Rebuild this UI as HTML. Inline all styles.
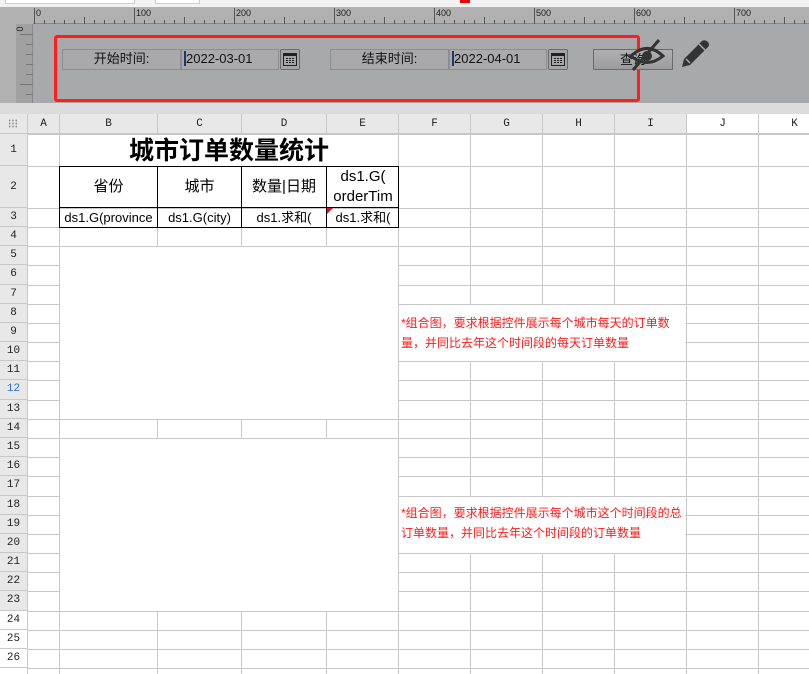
<!DOCTYPE html>
<html><head><meta charset="utf-8">
<style>
*{margin:0;padding:0;box-sizing:border-box}
body{width:809px;height:670px;overflow:hidden;background:#fff;font-family:"Liberation Sans","Noto Sans CJK SC",sans-serif;position:relative}
.a{position:absolute}
.cn{font-family:"Liberation Sans","Noto Sans CJK SC",sans-serif}
.hdr{font-family:"Liberation Mono","DejaVu Sans Mono",monospace;font-size:11px;color:#222;text-align:center}
.lbl{background:#a9a9ab;border:1px solid #8d8d8f;font-size:13px;color:#111;text-align:center;line-height:18px}
.inp{background:#aaaaac;border:1px solid #8d8d8f;font-size:13px;color:#111;line-height:18px;padding-left:2px}
.cal{border:1px solid #6a6a6a;border-radius:2px;background:#a5a5a7}
.red{color:#ff1a1a;font-size:12px;line-height:20px}
</style></head><body>
<div class="a" style="left:0;top:0;width:809px;height:7px;background:#f2f2f2"></div>
<div class="a" style="left:5px;top:0;width:130px;height:4px;background:#fff;border:1px solid #ccc;border-top:0"></div>
<div class="a" style="left:155px;top:0;width:45px;height:4px;background:#fff;border:1px solid #ccc;border-top:0"></div>
<div class="a" style="left:460px;top:0;width:10px;height:3px;background:#e00"></div>
<div class="a" style="left:0;top:7px;width:809px;height:96px;background:#a8a9ab"></div>
<div class="a" style="left:0;top:7px;width:33px;height:96px;background:#b1b1b1"></div>
<div class="a" style="left:16px;top:24px;width:17px;height:79px;background:#a1a1a1;border-right:1px solid #888"></div>
<div class="a" style="left:33px;top:7px;width:776px;height:17px;background:#b1b1b1;border-bottom:1px solid #888"></div>
<div id="ruler"></div>
<div class="a" style="left:17px;top:24px;font-size:9px;transform:rotate(90deg);color:#222">0</div>
<div class="a" style="left:54px;top:35px;width:586px;height:67px;border:3px solid #ff1e1e;border-radius:3px"></div>
<div class="a lbl" style="left:62px;top:49px;width:119px;height:21px">开始时间:</div>
<div class="a inp" style="left:181px;top:49px;width:98px;height:21px"><span style="border-left:2px solid #1a3a6a"></span>2022-03-01</div>
<div class="a cal" style="left:280px;top:49px;width:20px;height:21px"><svg width="18" height="19" viewBox="0 0 18 19"><rect x="2.5" y="3.5" width="13" height="12" fill="none" stroke="#222"/><rect x="3" y="4" width="12" height="2" fill="#222"/><g fill="#222"><rect x="5" y="8" width="2" height="1"/><rect x="8" y="8" width="2" height="1"/><rect x="11" y="8" width="2" height="1"/><rect x="5" y="10" width="2" height="1"/><rect x="8" y="10" width="2" height="1"/><rect x="11" y="10" width="2" height="1"/><rect x="5" y="12" width="2" height="1"/><rect x="8" y="12" width="2" height="1"/><rect x="11" y="12" width="2" height="1"/></g></svg></div>
<div class="a lbl" style="left:330px;top:49px;width:119px;height:21px">结束时间:</div>
<div class="a inp" style="left:449px;top:49px;width:98px;height:21px"><span style="border-left:2px solid #1a3a6a"></span>2022-04-01</div>
<div class="a cal" style="left:548px;top:49px;width:20px;height:21px"><svg width="18" height="19" viewBox="0 0 18 19"><rect x="2.5" y="3.5" width="13" height="12" fill="none" stroke="#222"/><rect x="3" y="4" width="12" height="2" fill="#222"/><g fill="#222"><rect x="5" y="8" width="2" height="1"/><rect x="8" y="8" width="2" height="1"/><rect x="11" y="8" width="2" height="1"/><rect x="5" y="10" width="2" height="1"/><rect x="8" y="10" width="2" height="1"/><rect x="11" y="10" width="2" height="1"/><rect x="5" y="12" width="2" height="1"/><rect x="8" y="12" width="2" height="1"/><rect x="11" y="12" width="2" height="1"/></g></svg></div>
<div class="a" style="left:593px;top:49px;width:80px;height:21px;border:1px solid #6a6a6a;background:linear-gradient(#b0b0b2,#9c9c9e);font-size:13px;text-align:center;line-height:19px;color:#111">查询</div>
<svg class="a" style="left:627px;top:37px" width="40" height="34" viewBox="0 0 40 34"><path d="M4 19 Q20 4 36 19 Q20 32 4 19Z" fill="none" stroke="#333" stroke-width="3"/><circle cx="20" cy="19" r="5" fill="#333"/><path d="M6 33 L32 3" stroke="#333" stroke-width="3"/></svg>
<svg class="a" style="left:678px;top:37px" width="34" height="34" viewBox="0 0 34 34"><path d="M4 30 L6 22 L24 4 Q27 2 30 5 Q32 8 30 10 L12 28 Z" fill="#333"/><path d="M8 22 L12 26" stroke="#a8a9ab" stroke-width="1.5"/><path d="M21 7 L27 13" stroke="#a8a9ab" stroke-width="1.5"/></svg>
<div class="a" style="left:0;top:103px;width:809px;height:11px;background:#dcdcdc"></div>
<div id="grid"></div>
<script>
var cols=[0,27,59,157,241,326,398,470,542,614,686,758,830];
var names=["","A","B","C","D","E","F","G","H","I","J","K"];
var h='';
var ht=114;
h+='<div class="a" style="left:0;top:'+ht+'px;width:809px;height:20px;background:#e8e8e8;border-bottom:1px solid #c8c8c8"></div>';
h+='<div class="a" style="left:686px;top:'+ht+'px;width:123px;height:20px;background:#fff;border-bottom:1px solid #c8c8c8"></div>';
for(var i=1;i<12;i++){h+='<div class="a hdr" style="left:'+cols[i]+'px;top:'+ht+'px;width:'+(cols[i+1]-cols[i])+'px;height:20px;line-height:20px;border-left:1px solid #c8c8c8">'+names[i]+'</div>';}
h+='<div class="a" style="left:8px;top:119px;width:10px;height:9px;background:radial-gradient(circle,#888 0.8px,transparent 1px) 0 0/3.3px 3px"></div>';
var rows=[134,166,208,227];
for(var r=4;r<=27;r++)rows.push(227+(r-3)*19.18);
for(var r=1;r<=26;r++){var t=rows[r-1],b=rows[r];
 h+='<div class="a hdr" style="left:0;top:'+t+'px;width:27px;height:'+(b-t)+'px;line-height:'+(b-t)+'px;background:'+(r<=23?'#e8e8e8':'#fff')+';border-bottom:1px solid #c8c8c8;color:'+(r==12?'#2a6fd6':'#222')+'">'+r+'</div>';}
for(var i=1;i<12;i++)h+='<div class="a" style="left:'+cols[i]+'px;top:134px;width:1px;height:540px;background:#c8c8c8"></div>';
for(var r=1;r<=27;r++)h+='<div class="a" style="left:27px;top:'+rows[r-1]+'px;width:790px;height:1px;background:#c8c8c8"></div>';
function white(l,t,w,hh){h+='<div class="a" style="left:'+l+'px;top:'+t+'px;width:'+w+'px;height:'+hh+'px;background:#fff"></div>';}
white(60,135,338,31);
white(60,rows[4]+1,338,rows[13]-rows[4]-1);
white(60,rows[14]+1,338,rows[23]-rows[14]-1);
white(399,rows[7]+1,286,rows[10]-rows[7]-1);
white(399,rows[17]+1,286,rows[20]-rows[17]-1);
document.getElementById('grid').innerHTML=h;
</script>
<div class="a cn" style="left:60px;top:134px;width:338px;height:32px;text-align:center;font-size:25px;font-weight:bold;line-height:34px;color:#000">城市订单数量统计</div>
<div class="a" style="left:59px;top:166px;width:340px;height:62px;border:1px solid #000"></div>
<div class="a" style="left:59px;top:207px;width:340px;height:1px;background:#000"></div>
<div class="a" style="left:157px;top:166px;width:1px;height:61px;background:#000"></div>
<div class="a" style="left:241px;top:166px;width:1px;height:61px;background:#000"></div>
<div class="a" style="left:326px;top:166px;width:1px;height:61px;background:#000"></div>
<div class="a cn" style="left:60px;top:167px;width:97px;height:40px;line-height:40px;text-align:center;font-size:15px">省份</div>
<div class="a cn" style="left:158px;top:167px;width:83px;height:40px;line-height:40px;text-align:center;font-size:15px">城市</div>
<div class="a cn" style="left:242px;top:167px;width:84px;height:40px;line-height:40px;text-align:center;font-size:15px">数量|日期</div>
<div class="a cn" style="left:327px;top:167px;width:72px;height:40px;line-height:20px;text-align:center;font-size:15px;overflow:hidden;white-space:nowrap">ds1.G(<br>orderTim</div>
<div class="a cn" style="left:60px;top:208px;width:97px;height:19px;line-height:19px;text-align:center;font-size:13px;overflow:hidden;white-space:nowrap">ds1.G(province</div>
<div class="a cn" style="left:158px;top:208px;width:83px;height:19px;line-height:19px;text-align:center;font-size:13px">ds1.G(city)</div>
<div class="a cn" style="left:242px;top:208px;width:84px;height:19px;line-height:19px;text-align:center;font-size:13px">ds1.求和(</div>
<div class="a cn" style="left:327px;top:208px;width:72px;height:19px;line-height:19px;text-align:center;font-size:13px">ds1.求和(</div>
<div class="a" style="left:327px;top:208px;width:0;height:0;border-top:6px solid #e0102a;border-right:6px solid transparent"></div>
<div class="a red cn" style="left:401px;top:313px;width:285px">*组合图，要求根据控件展示每个城市每天的订单数量，并同比去年这个时间段的每天订单数量</div>
<div class="a red cn" style="left:401px;top:503px;width:285px">*组合图，要求根据控件展示每个城市这个时间段的总订单数量，并同比去年这个时间段的订单数量</div>
<script>
var r='';
for(var x=0;x<=775;x+=10){var big=x%100==0,mid=x%50==0;r+='<div class="a" style="left:'+(34+x)+'px;top:'+(big?8:(mid?17:20))+'px;width:1px;height:'+(big?16:(mid?7:4))+'px;background:#555"></div>';if(big)r+='<div class="a" style="left:'+(36+x)+'px;top:8px;font-size:9px;color:#222">'+x+'</div>';}
for(var y=0;y<80;y+=10)r+='<div class="a" style="left:'+(y%50==0?20:26)+'px;top:'+(34+y)+'px;width:'+(y%50==0?13:7)+'px;height:1px;background:#777"></div>';
document.getElementById('ruler').innerHTML=r;
</script>
</body></html>
